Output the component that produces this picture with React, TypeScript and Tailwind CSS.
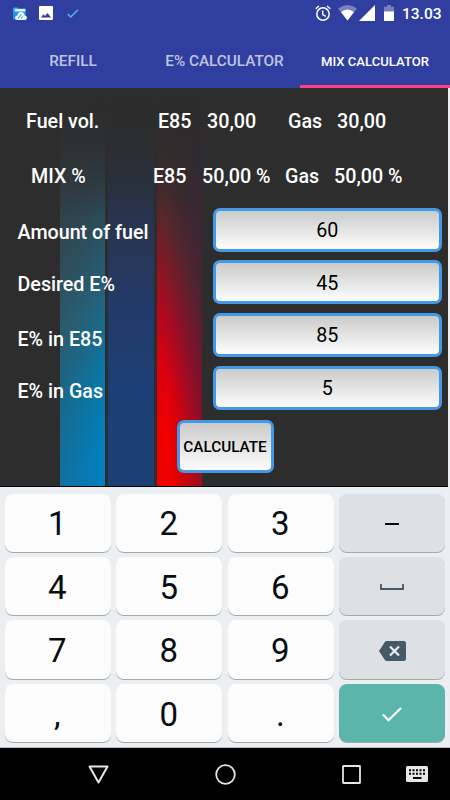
import React, { useState } from 'react';

interface Field {
  id: string;
  label: string;
  labelClass: string;
}

const fields: Field[] = [
  { id: 'amount', label: 'Amount of fuel', labelClass: 'pt-[7px]' },
  { id: 'desired', label: 'Desired E%', labelClass: 'pt-[5px]' },
  { id: 'e85', label: 'E% in E85', labelClass: 'pt-[10px]' },
  { id: 'gas', label: 'E% in Gas', labelClass: 'pt-[9px]' },
];

const tabs = [
  { id: 'refill', label: 'REFILL', className: 'w-[146px] pt-[2px] text-[15.300px] text-white/70' },
  { id: 'calc', label: 'E% CALCULATOR', className: 'w-[154px] pt-[2px] pl-[3px] text-[15.300px] text-white/70' },
  { id: 'mix', label: 'MIX CALCULATOR', className: 'w-[150px] pt-[2px] text-[13.100px] text-white' },
];

const keys = ['1', '2', '3', 'minus', '4', '5', '6', 'space', '7', '8', '9', 'del', ',', '0', '.', 'enter'];

const StatusBar = () => (
  <div className="flex h-[36px] items-start pt-[5px] pl-[13px] text-white">
    <svg className="mt-[1px]" width="15" height="15" viewBox="0 0 15 15">
      <path d="M1.500 1.500h3l1 1H12q1 0 1 1V13H1.500Q0 13 0 11.500V3q0-1.500 1.500-1.500z" fill="#39a9ee" />
      <path d="M2 3h10v3H2z" fill="#d9f3ff" />
      <path d="M0 5.500h13v8H1.500Q0 13.500 0 12z" fill="#2494e8" />
      <path d="M4.500 14Q2 14 2 11.700q0-2 2.300-2.300Q5 6 8 6t3.700 3.400q2.300.3 2.300 2.300 0 2.300-2.500 2.300z" fill="#eefaff" />
      <path d="M5 12.500l3-4M8 12.500l1.500-2" fill="none" stroke="#42a5e8" strokeWidth="1.200" />
    </svg>
    <svg className="mt-[1px] ml-[11px]" width="14" height="14" viewBox="0 0 14 14">
      <rect width="14" height="14" rx="1" fill="#fff" />
      <path d="M2 11.500l2.500-3.300 1.500 1.700L8.500 7l3.500 4.500z" fill="#303f9f" />
    </svg>
    <svg className="mt-[4px] ml-[14px]" width="12" height="9" viewBox="0 0 12 9">
      <path d="M.7 5l3 3L11 .7" fill="none" stroke="#4fb9f5" strokeWidth="1.400" />
    </svg>
    <svg className="ml-[236px]" width="16" height="17" viewBox="0 0 16 17">
      <circle cx="8" cy="9" r="6.200" fill="none" stroke="#fff" strokeWidth="1.500" />
      <path d="M7.700 5.500v4l3 1.800M.7 3.700L4 1M15.300 3.700L12 1" fill="none" stroke="#fff" strokeWidth="1.400" />
    </svg>
    <svg className="ml-[7px]" width="19" height="16" viewBox="0 0 19 16">
      <path d="M0 3.500Q9.500-3.500 19 3.500L9.500 15.500z" fill="#fff" fillOpacity=".35" />
      <path d="M3 7q6.500-5 13 0L9.500 15.500z" fill="#fff" />
    </svg>
    <svg className="ml-[2px]" width="16" height="16" viewBox="0 0 16 16">
      <path d="M0 16L16 0v16z" fill="#fff" />
    </svg>
    <svg className="ml-[9px]" width="10" height="16" viewBox="0 0 10 16">
      <path d="M0 1.700h3V0h4v1.700h3V16H0z" fill="#fff" fillOpacity=".35" />
      <path d="M0 6.500h10V16H0z" fill="#fff" />
    </svg>
    <span className="ml-[8px] text-[15.500px] leading-[18px] font-medium">13.03</span>
  </div>
);

// three fading bars behind the form
const Stripes = () => (
  <div className="col-start-1 row-start-1 flex [mask-image:linear-gradient(transparent_2%,black_32%)] pl-[60px]">
    <div className="w-[45px] bg-[linear-gradient(135deg,#2d2d2d_12%,#2c4550_34%,#25617a_55%,#0878a8_74%,#0080c0_90%)]">
      <div className="h-full bg-linear-to-r from-[#3a4a50]/30 to-transparent" />
    </div>
    <div className="ml-[3px] w-[46px] bg-[linear-gradient(180deg,#2d2d2d_5%,#2a303d_18%,#283550_36%,#233a69_55%,#1c4075_75%)]" />
    <div className="ml-[3px] w-[45px] bg-[linear-gradient(243deg,#2d2d2d_10%,#3c2b2d_31%,#5a262b_43%,#a80a22_61%,#dc000e_74%,#ee0000_86%)]">
      <div className="h-full bg-linear-to-r from-transparent from-30% to-[#3c1e3c]/45" />
    </div>
  </div>
);

const KeyFace = ({ name }: { name: string }) => {
  if (name === 'minus') {
    return <span className="block h-[2px] w-[14px] bg-[#050d12]" />;
  }
  if (name === 'space') {
    return (
      <svg width="24" height="6" viewBox="0 0 24 6">
        <path d="M1 0v5h22V0" fill="none" stroke="#455a64" strokeWidth="1.800" />
      </svg>
    );
  }
  if (name === 'del') {
    return (
      <svg className="ml-[2px]" width="27" height="20" viewBox="0 0 27 20">
        <path d="M8 0h17q2 0 2 2v16q0 2-2 2H8q-1.500 0-2.300-1.300L0 10l5.700-8.700Q6.500 0 8 0z" fill="#455a64" />
        <path d="M11 5.500l9 9M20 5.500l-9 9" stroke="#e8ecee" strokeWidth="2.200" />
      </svg>
    );
  }
  if (name === 'enter') {
    return (
      <svg className="ml-[1px]" width="20" height="15" viewBox="0 0 20 15">
        <path d="M1 7.500l5.500 5.700L19 1" fill="none" stroke="#fff" strokeWidth="2.200" />
      </svg>
    );
  }
  return <span>{name}</span>;
};

const keyColor = (name: string) => {
  if (name === 'enter') return 'bg-[#5bb5aa]';
  if (name.length > 1) return 'bg-[#dde1e4]';
  return 'bg-[#fcfcfc]';
};

const Keyboard = ({ onPress }: { onPress: (key: string) => void }) => (
  <div className="h-[261px] border-b border-[#b8bcbf] bg-[#ebeff2] px-[4.700px] pt-[6.500px]">
    <div className="grid grid-cols-4 gap-x-[5.300px] gap-y-[5.300px]">
      {keys.map(key => (
        <button
          key={key}
          onClick={() => onPress(key)}
          className={`flex h-[58.200px] items-center justify-center rounded-[8px] pt-[2px] pr-[1px] text-[33px] leading-none text-[#050d12] shadow-[0_1px_0_#a5a9ac] ${keyColor(key)}`}
        >
          <KeyFace name={key} />
        </button>
      ))}
    </div>
  </div>
);

const NavBar = () => (
  <div className="flex h-[52px] items-center bg-black">
    <svg className="ml-[88px]" width="21" height="19" viewBox="0 0 21 19">
      <path d="M1.500 1.500h18l-9 16z" fill="none" stroke="#e6e6e6" strokeWidth="2" strokeLinejoin="round" />
    </svg>
    <svg className="ml-[106px]" width="21" height="21" viewBox="0 0 21 21">
      <circle cx="10.500" cy="10.500" r="9.300" fill="none" stroke="#e6e6e6" strokeWidth="1.800" />
    </svg>
    <svg className="ml-[106px]" width="19" height="19" viewBox="0 0 19 19">
      <rect x="1" y="1" width="17" height="17" rx=".5" fill="none" stroke="#e6e6e6" strokeWidth="1.800" />
    </svg>
    <svg className="ml-[45px]" width="22" height="16" viewBox="0 0 22 16">
      <rect width="22" height="16" rx="1.500" fill="#e6e6e6" />
      <path d="M3 4.200h16M3 7.700h16" stroke="#000" strokeWidth="2" strokeDasharray="2 1.500" />
      <path d="M7 12h8.500" stroke="#000" strokeWidth="2" />
    </svg>
  </div>
);

export default function App() {
  const [values, setValues] = useState<{ [id: string]: string }>({
    amount: '60',
    desired: '45',
    e85: '85',
    gas: '5',
  });
  const [active, setActive] = useState('amount');
  const [share, setShare] = useState(50);

  const amount = Number(values.amount.replace(',', '.')) || 0;
  const format = (n: number) => n.toFixed(2).replace('.', ',');

  const handleCalculate = () => {
    const e85 = Number(values.e85);
    const gas = Number(values.gas);
    if (e85 === gas) return;
    setShare(((Number(values.desired) - gas) / (e85 - gas)) * 100);
  };

  const handleKey = (key: string) => {
    if (key === 'enter') {
      handleCalculate();
      return;
    }
    if (key === 'minus' || key === 'space') return;
    setValues(prev => ({
      ...prev,
      [active]: key === 'del' ? prev[active].slice(0, -1) : prev[active] + key,
    }));
  };

  return (
    <div className="flex h-[800px] w-[450px] flex-col overflow-hidden bg-[#ebeff2] font-[Roboto,sans-serif]">
      <header className="h-[88px] bg-[#303f9f]">
        <StatusBar />
        <nav className="flex h-[52px]">
          {tabs.map(tab => (
            <div
              key={tab.id}
              className={`flex items-center justify-center border-b-[3px] font-medium whitespace-nowrap ${tab.id === 'mix' ? 'border-[#ff4081]' : 'border-transparent'} ${tab.className}`}
            >
              {tab.label}
            </div>
          ))}
        </nav>
      </header>

      <main className="grid h-[399px] w-[448px] border-b border-black bg-[#2d2d2d] text-[19.700px] leading-[24px] font-medium text-white">
        <Stripes />
        <div className="z-10 col-start-1 row-start-1 whitespace-nowrap">
          <div className="flex pt-[22px] pl-[26px]">
            <span className="w-[132px]">Fuel vol.</span>
            <span className="w-[49px]">E85</span>
            <span className="w-[81px]">{format((amount * share) / 100)}</span>
            <span className="w-[49px]">Gas</span>
            <span>{format((amount * (100 - share)) / 100)}</span>
          </div>
          <div className="flex pt-[31px] pl-[31px]">
            <span className="w-[122px]">MIX %</span>
            <span className="w-[49px]">E85</span>
            <span className="w-[83px]">{format(share)} %</span>
            <span className="w-[49px]">Gas</span>
            <span>{format(100 - share)} %</span>
          </div>

          <div className="mt-[18.500px] flex flex-col gap-[8.700px]">
            {fields.map(field => (
              <label key={field.id} className="flex h-[44px] items-center pl-[17.500px]">
                <span className={`w-[195.500px] ${field.labelClass}`}>{field.label}</span>
                <input
                  value={values[field.id]}
                  onFocus={() => setActive(field.id)}
                  onChange={e => setValues({ ...values, [field.id]: e.target.value })}
                  className="h-[44px] w-[228.500px] rounded-[7px] border-[3.500px] border-[#4299e9] bg-linear-to-b from-[#cbcbcb] to-[#fdfdfd] pt-[2px] text-center font-normal text-black outline-none"
                />
              </label>
            ))}
          </div>

          <button
            onClick={handleCalculate}
            className="mt-[10px] ml-[177px] h-[53px] w-[97px] rounded-[7px] border-[3.500px] border-[#4299e9] bg-linear-to-b from-[#cbcbcb] to-[#fdfdfd] pt-[2px] text-[15.300px] text-black"
          >
            <span className="-ml-[1px]">CALCULATE</span>
          </button>
        </div>
      </main>

      <Keyboard onPress={handleKey} />
      <NavBar />
    </div>
  );
}
